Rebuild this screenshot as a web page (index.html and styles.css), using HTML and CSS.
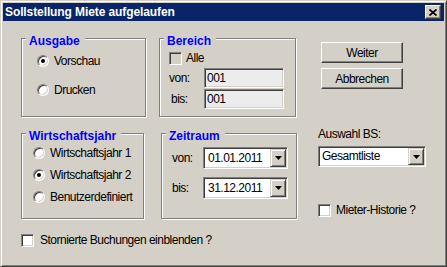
FILE: index.html
```html
<!DOCTYPE html>
<html lang="de">
<head>
    <meta charset="UTF-8">
    <title>Sollstellung Miete aufgelaufen</title>
    <link rel="stylesheet" href="styles.css">
</head>
<body>
    <div class="window">
        <div class="titlebar">
            <span class="title">Sollstellung Miete aufgelaufen</span>
            <button class="close-btn">
                <svg width="8" height="7" viewBox="0 0 8 7"><path d="M0.5 0.5L7.5 6.5M7.5 0.5L0.5 6.5" stroke="#000" stroke-width="1.7"/></svg>
            </button>
        </div>

        <div class="content">
            <div class="main">
                <div class="groups">
                    <div class="row row-top">
                        <div class="group group-ausgabe">
                            <span class="legend">Ausgabe</span>
                            <div class="option"><span class="radio checked"></span>Vorschau</div>
                            <div class="option"><span class="radio"></span>Drucken</div>
                        </div>
                        <div class="group group-bereich">
                            <span class="legend">Bereich</span>
                            <div class="option"><span class="check check-gray"></span>Alle</div>
                            <div class="field field-von">
                                <span class="field-label">von:</span>
                                <span class="textbox">001</span>
                            </div>
                            <div class="field field-bis">
                                <span class="field-label indent">bis:</span>
                                <span class="textbox">001</span>
                            </div>
                        </div>
                    </div>

                    <div class="row row-bottom">
                        <div class="group group-jahr">
                            <span class="legend">Wirtschaftsjahr</span>
                            <div class="option"><span class="radio"></span>Wirtschaftsjahr 1</div>
                            <div class="option"><span class="radio checked"></span>Wirtschaftsjahr 2</div>
                            <div class="option"><span class="radio"></span>Benutzerdefiniert</div>
                        </div>
                        <div class="group group-zeitraum">
                            <span class="legend">Zeitraum</span>
                            <div class="field date">
                                <span class="field-label">von:</span>
                                <div class="combo">
                                    <span class="combo-value">01.01.2011</span>
                                    <span class="combo-btn"><svg width="7" height="4" viewBox="0 0 7 4"><path d="M0 0H7L3.5 4Z"/></svg></span>
                                </div>
                            </div>
                            <div class="field date">
                                <span class="field-label">bis:</span>
                                <div class="combo">
                                    <span class="combo-value">31.12.2011</span>
                                    <span class="combo-btn"><svg width="7" height="4" viewBox="0 0 7 4"><path d="M0 0H7L3.5 4Z"/></svg></span>
                                </div>
                            </div>
                        </div>
                    </div>
                </div>

                <div class="side">
                    <button class="btn btn-weiter">Weiter</button>
                    <button class="btn btn-abbrechen">Abbrechen</button>
                    <span class="side-label">Auswahl BS:</span>
                    <div class="combo combo-bs">
                        <span class="combo-value">Gesamtliste</span>
                        <span class="combo-btn"><svg width="7" height="4" viewBox="0 0 7 4"><path d="M0 0H7L3.5 4Z"/></svg></span>
                    </div>
                    <div class="option option-historie"><span class="check"></span>Mieter-Historie ?</div>
                </div>
            </div>

            <div class="footer">
                <div class="option"><span class="check"></span>Stornierte Buchungen einblenden ?</div>
            </div>
        </div>
    </div>
</body>
</html>
```

FILE: styles.css
```css
* {
    box-sizing: border-box;
}
body {
    margin: 0;
    font-family: "Liberation Sans", Arial, sans-serif;
    font-size: 12px;
    line-height: 14px;
    letter-spacing: -0.5px;
    color: #000;
}
.window {
    width: 447px;
    height: 267px;
    padding: 2px;
    background: #d4d0c8;
    border: 1px solid;
    border-color: #d4d0c8 #404040 #404040 #d4d0c8;
    box-shadow: inset 1px 1px #fff, inset -1px -1px #808080;
}
.titlebar {
    height: 18px;
    display: flex;
    align-items: center;
    justify-content: space-between;
    padding: 0 3px 0 2px;
    background: #0a246a;
}
.title {
    color: #fff;
    font-weight: bold;
    letter-spacing: -0.1px;
    line-height: 18px;
}
.close-btn {
    width: 16px;
    height: 14px;
    padding: 0;
    display: flex;
    align-items: center;
    justify-content: center;
    background: #d4d0c8;
    border: 1px solid;
    border-color: #fff #404040 #404040 #fff;
    box-shadow: inset -1px -1px #808080;
}

/* Inhalt */
.content {
    padding-left: 18px;
}
.main {
    display: flex;
}
.row {
    display: flex;
}
.row-top {
    margin-top: 17px;
}
.row-bottom {
    margin-top: 16px;
}
.group {
    position: relative;
    display: flex;
    flex-direction: column;
    border: 1px solid #808080;
    box-shadow: 1px 1px 0 #fff, inset 1px 1px 0 #fff;
}
.legend {
    position: absolute;
    top: -5px;
    left: 4px;
    padding: 0 5px 0 3px;
    background: #d4d0c8;
    color: #0000ff;
    font-weight: bold;
    letter-spacing: 0;
}
.group-ausgabe {
    width: 125px;
    height: 79px;
    padding: 15px 0 0 15px;
    gap: 15px;
}
.group-bereich {
    width: 137px;
    height: 79px;
    margin-left: 13px;
    padding: 12px 0 0 9px;
}
.group-jahr {
    width: 123px;
    height: 86px;
    padding: 12px 0 0 11px;
    gap: 8px;
}
.group-zeitraum {
    width: 136px;
    height: 86px;
    margin-left: 17px;
    padding: 13px 0 0 10px;
    gap: 8px;
}

/* Optionen */
.option {
    display: flex;
    align-items: center;
    height: 14px;
}
.radio {
    position: relative;
    width: 12px;
    height: 12px;
    margin-right: 5px;
    border-radius: 50%;
    background: #fff;
    border: 1px solid;
    border-color: #808080 #fff #fff #808080;
    box-shadow: inset 1px 1px #404040, inset -1px -1px #d4d0c8;
}
.radio.checked::after {
    content: "";
    position: absolute;
    left: 3px;
    top: 3px;
    width: 4px;
    height: 4px;
    border-radius: 50%;
    background: #000;
}
.check {
    width: 13px;
    height: 13px;
    margin-right: 5px;
    background: #fff;
    border: 1px solid;
    border-color: #808080 #fff #fff #808080;
    box-shadow: inset 1px 1px #404040, inset -1px -1px #d4d0c8;
}
.check-gray {
    background: #d4d0c8;
    margin-right: 4px;
}

/* Felder */
.field {
    display: flex;
    align-items: center;
    height: 20px;
}
.field-von {
    margin-top: 3px;
}
.field-bis {
    margin-top: 1px;
}
.field-label {
    width: 35px;
}
.field-label.indent {
    padding-left: 2px;
}
.textbox {
    width: 80px;
    height: 20px;
    padding-left: 2px;
    line-height: 18px;
    background: #ececec;
    border: 1px solid;
    border-color: #808080 #fff #fff #808080;
    box-shadow: inset 1px 1px #404040, inset -1px -1px #d4d0c8;
}
.field.date {
    height: 22px;
}
.field.date .field-label {
    width: 31px;
}
.combo {
    display: flex;
    width: 85px;
    height: 22px;
    padding: 1px;
    background: #fff;
    border: 1px solid;
    border-color: #808080 #fff #fff #808080;
    box-shadow: inset 1px 1px #404040, inset -1px -1px #d4d0c8;
}
.combo-value {
    flex: 1;
    padding-left: 3px;
    line-height: 18px;
}
.combo-btn {
    width: 16px;
    display: flex;
    align-items: center;
    justify-content: center;
    background: #d4d0c8;
    border: 1px solid;
    border-color: #d4d0c8 #404040 #404040 #d4d0c8;
    box-shadow: inset 1px 1px #fff, inset -1px -1px #808080;
}

/* Rechte Spalte */
.side {
    display: flex;
    flex-direction: column;
    width: 109px;
    margin-left: 21px;
}
.btn {
    width: 82px;
    height: 21px;
    margin-left: 3px;
    padding: 0;
    font-family: inherit;
    font-size: 12px;
    letter-spacing: -0.5px;
    color: #000;
    background: #d4d0c8;
    border: 1px solid;
    border-color: #fff #404040 #404040 #fff;
    box-shadow: inset -1px -1px #808080;
}
.btn-weiter {
    margin-top: 21px;
}
.btn-abbrechen {
    margin-top: 5px;
}
.side-label {
    margin-top: 38px;
}
.combo-bs {
    width: 108px;
    height: 21px;
    margin-top: 5px;
}
.combo-bs .combo-value {
    padding-left: 2px;
    line-height: 17px;
}
.option-historie {
    margin-top: 36px;
}

.footer {
    margin-top: 14px;
}
.footer .check {
    margin-right: 6px;
}
```
